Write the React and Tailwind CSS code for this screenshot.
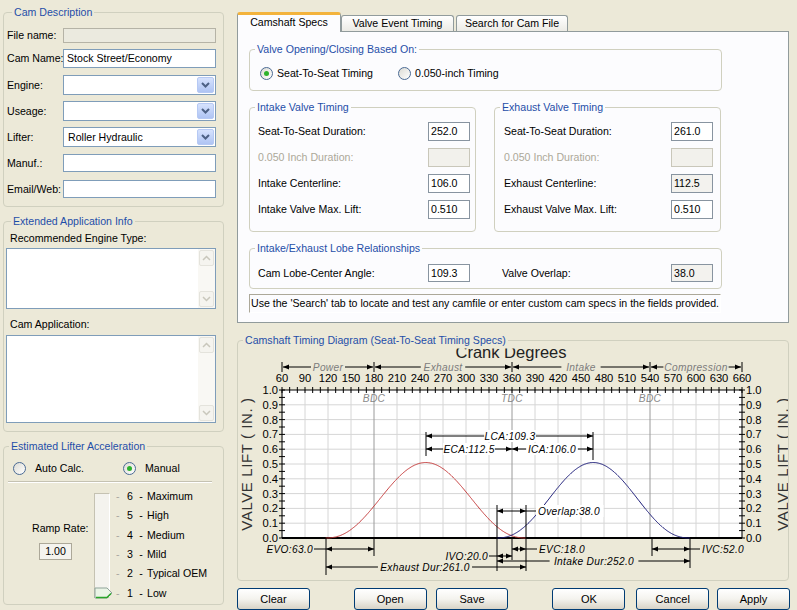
import React from 'react';

// crank degrees -> px, lift -> px (page coordinates, chart svg uses same viewBox)
const X = (d) => 282 + ((d - 60) * 460) / 600;
const Y = (v) => 538 - v * 148;

function lobe(open, close, peak) {
  const pts = [];
  for (let d = open; d <= close; d += 1) {
    const t = (d - open) / (close - open);
    const l = peak * Math.pow((1 - Math.cos(2 * Math.PI * t)) / 2, 1.15);
    pts.push(`${X(d).toFixed(1)},${Y(l).toFixed(1)}`);
  }
  return 'M' + pts.join(' L');
}

const Arrow = ({ x, y, dir }) => (
  <polygon points={`${x},${y} ${x - dir * 6},${y - 2.5} ${x - dir * 6},${y + 2.5}`} fill="#000" />
);

const ital = { fontStyle: 'italic', fontSize: 10.2, letterSpacing: 0.3 };

function Label({ x, y, text, anchor = 'middle', bg }) {
  const w = text.length * 5.3 + 4;
  const left = anchor === 'middle' ? x - w / 2 : anchor === 'end' ? x - w + 2 : x - 2;
  return (
    <g>
      {bg && <rect x={left} y={y - 6} width={w} height={12} fill={bg} />}
      <text x={x} y={y + 4} textAnchor={anchor} style={ital} fill="#000">
        {text}
      </text>
    </g>
  );
}

function Dim({ x1, x2, y, from, to }) {
  return (
    <g>
      <line x1={from ?? x1} x2={to ?? x2} y1={y} y2={y} stroke="#000" />
      <Arrow x={x1} y={y} dir={-1} />
      <Arrow x={x2} y={y} dir={1} />
    </g>
  );
}

function Chart() {
  const vgrid = [];
  for (let d = 60; d <= 660; d += 30) vgrid.push(d);
  const hgrid = [];
  for (let i = 1; i < 10; i++) hgrid.push(i / 10);
  const topTicks = [];
  for (let d = 60; d <= 660; d += 10) topTicks.push(d);
  const yTicks = [];
  for (let i = 0; i <= 20; i++) yTicks.push(i * 0.05);
  const yLabels = [];
  for (let i = 0; i <= 10; i++) yLabels.push(i / 10);
  const phases = [
    [60, 180, 'Power'],
    [180, 360, 'Exhaust'],
    [360, 540, 'Intake'],
    [540, 660, 'Compression'],
  ];

  return (
    <svg
      width="550"
      height="233"
      viewBox="238 347 550 233"
      className="block"
      fontFamily="'Liberation Sans', Arial, sans-serif"
    >
      <defs>
        <clipPath id="titleClip">
          <rect x="238" y="348.5" width="550" height="20" />
        </clipPath>
      </defs>
      <text x="511" y="358" textAnchor="middle" fontSize="16.5" fill="#222" clipPath="url(#titleClip)">
        Crank Degrees
      </text>

      {/* stroke phases */}
      {phases.map(([a, b, t]) => {
        const x1 = X(a) + 1;
        const x2 = X(b) - 1;
        const cx = (x1 + x2) / 2;
        const w = t.length * 5.2 + 8;
        return (
          <g key={t}>
            <line x1={x1} x2={x2} y1="367" y2="367" stroke="#000" />
            <Arrow x={x1} y={367} dir={-1} />
            <Arrow x={x2} y={367} dir={1} />
            <rect x={cx - w / 2} y="361" width={w} height="11" fill="#ECE9D8" />
            <text x={cx} y="370.5" textAnchor="middle" style={ital} fill="#7c7c7c">
              {t}
            </text>
          </g>
        );
      })}
      {[60, 180, 360, 540, 660].map((d) => (
        <line key={d} x1={X(d)} x2={X(d)} y1="362" y2="372" stroke="#000" />
      ))}

      {vgrid.map((d) => (
        <text key={d} x={X(d)} y="381.5" textAnchor="middle" fontSize="11.2" fill="#000">
          {d}
        </text>
      ))}

      {/* plot */}
      <rect x="282" y="390" width="460" height="148" fill="#fff" />
      {hgrid.map((v) => (
        <line key={v} x1="282" x2="742" y1={Y(v)} y2={Y(v)} stroke="#d6d6d6" />
      ))}
      {vgrid.map((d) => (
        <line
          key={d}
          x1={X(d)}
          x2={X(d)}
          y1="390"
          y2="538"
          stroke={d === 180 || d === 360 || d === 540 ? '#9a9a9a' : '#d6d6d6'}
        />
      ))}
      {[
        [180, 'BDC'],
        [360, 'TDC'],
        [540, 'BDC'],
      ].map(([d, t]) => (
        <text key={d} x={X(d)} y="402" textAnchor="middle" style={ital} fill="#8a8a8a">
          {t}
        </text>
      ))}

      <line x1="282" x2="742" y1="390" y2="390" stroke="#000" />
      {topTicks.map((d) => (
        <line key={d} x1={X(d)} x2={X(d)} y1="387" y2="393" stroke="#000" />
      ))}
      <line x1="282" x2="282" y1="390" y2="538" stroke="#000" />
      <line x1="742" x2="742" y1="390" y2="538" stroke="#000" />
      {yTicks.map((v) => (
        <g key={v}>
          <line x1="279" x2="285" y1={Y(v)} y2={Y(v)} stroke="#000" />
          <line x1="739" x2="745" y1={Y(v)} y2={Y(v)} stroke="#000" />
        </g>
      ))}
      <line x1="282" x2="742" y1="538" y2="538" stroke="#000" strokeWidth="2" />
      {yLabels.map((v) => (
        <g key={v}>
          <text x="278" y={Y(v) + 4} textAnchor="end" fontSize="11.2" fill="#000">
            {v.toFixed(1)}
          </text>
          <text x="746" y={Y(v) + 4} fontSize="11.2" fill="#000">
            {v.toFixed(1)}
          </text>
        </g>
      ))}

      <text transform="translate(252,464) rotate(-90)" textAnchor="middle" fontSize="15" letterSpacing="0.6" fill="#333">
        VALVE LIFT ( IN. )
      </text>
      <text transform="translate(788,464) rotate(-90)" textAnchor="middle" fontSize="15" letterSpacing="0.6" fill="#333">
        VALVE LIFT ( IN. )
      </text>

      {/* lobes */}
      <path d={lobe(117, 378, 0.51)} fill="none" stroke="#c43c3c" />
      <path d={lobe(340, 592, 0.51)} fill="none" stroke="#1c1c78" />

      {/* centerline dims */}
      <line x1="426" x2="426" y1="432" y2="456" stroke="#000" />
      <line x1="593" x2="593" y1="432" y2="460" stroke="#000" />
      <Dim x1={426} x2={593} y={436} />
      <Label x={510} y={436} text="LCA:109.3" bg="#fff" />
      <Dim x1={426} x2={512} y={449} />
      <Label x={469} y={449} text="ECA:112.5" bg="#fff" />
      <Dim x1={512} x2={593} y={449} />
      <Label x={552} y={449} text="ICA:106.0" bg="#fff" />

      {/* overlap */}
      <line x1="497" x2="497" y1="505" y2="571" stroke="#000" />
      <line x1="526" x2="526" y1="505" y2="571" stroke="#000" />
      <Dim x1={497} x2={526} y={511} to={537} />
      <Label x={538} y={511} text="Overlap:38.0" anchor="start" bg="#fff" />

      {/* event dims below plot */}
      <line x1="326" x2="326" y1="538" y2="575" stroke="#000" />
      <line x1="374" x2="374" y1="538" y2="556" stroke="#000" />
      <line x1="512" x2="512" y1="538" y2="560" stroke="#000" />
      <line x1="652" x2="652" y1="538" y2="556" stroke="#000" />
      <line x1="690" x2="690" y1="538" y2="568" stroke="#000" />

      <Dim x1={326} x2={374} y={549} from={314} />
      <Label x={313} y={549} text="EVO:63.0" anchor="end" />
      <Dim x1={497} x2={512} y={556} from={489} />
      <Label x={488} y={556} text="IVO:20.0" anchor="end" />
      <Dim x1={512} x2={526} y={549} to={537} />
      <Label x={539} y={549} text="EVC:18.0" anchor="start" />
      <Dim x1={652} x2={690} y={549} to={700} />
      <Label x={702} y={549} text="IVC:52.0" anchor="start" />
      <Dim x1={497} x2={690} y={561} />
      <Label x={594} y={561} text="Intake Dur:252.0" bg="#ECE9D8" />
      <Dim x1={326} x2={526} y={567} />
      <Label x={425} y={567} text="Exhaust Dur:261.0" bg="#ECE9D8" />
    </svg>
  );
}

function Group({ title, className = '', children }) {
  return (
    <fieldset className={`border border-[#D0D0BF] rounded-[4px] ${className}`}>
      <legend className="ml-[5px] px-[2px] leading-[13px] text-[#1f4ea8]">{title}</legend>
      {children}
    </fieldset>
  );
}

function Radio({ checked }) {
  return (
    <span className="w-[13px] h-[13px] shrink-0 rounded-full border border-[#4a6a94] bg-linear-to-br from-[#DCDBD4] to-white flex items-center justify-center">
      {checked && <span className="w-[5px] h-[5px] rounded-full bg-[#2DB22D]" />}
    </span>
  );
}

function Chevron({ up, color = '#4D6185', w = 2 }) {
  return (
    <svg width="9" height="6" viewBox="0 0 9 6">
      <path d={up ? 'M1 5 L4.5 1.5 L8 5' : 'M1 1 L4.5 4.5 L8 1'} fill="none" stroke={color} strokeWidth={w} />
    </svg>
  );
}

function Combo({ value }) {
  return (
    <div className="w-[153px] h-full border border-[#7F9DB9] bg-white flex items-center justify-between pl-[4px] pr-[1px]">
      <span>{value}</span>
      <div className="w-[17px] h-[16px] rounded-[2px] border border-[#B6C9F4] bg-linear-to-b from-[#D6E2FD] to-[#AFC4F3] flex items-center justify-center">
        <Chevron />
      </div>
    </div>
  );
}

function Field({ label, children, className = 'mt-[6px] h-[20px]' }) {
  return (
    <div className={`flex items-center ${className}`}>
      <span className="w-[56px] whitespace-nowrap">{label}</span>
      {children}
    </div>
  );
}

const box = 'w-[153px] h-full border border-[#7F9DB9] bg-white flex items-center pl-[3px]';

function TextArea({ className }) {
  const btn =
    'h-[16px] mx-[1px] rounded-[2px] border border-[#E4E3DC] bg-[#F5F4EF] flex items-center justify-center';
  return (
    <div className={`w-[210px] border border-[#7F9DB9] bg-white flex justify-end ${className}`}>
      <div className="w-[17px] h-full py-[1px] flex flex-col bg-[#F9F8F4]">
        <div className={btn}>
          <Chevron up color="#C9C7BC" w={1.5} />
        </div>
        <div className="flex-1" />
        <div className={btn}>
          <Chevron color="#C9C7BC" w={1.5} />
        </div>
      </div>
    </div>
  );
}

function LeftColumn() {
  const rates = [
    ['6', 'Maximum'],
    ['5', 'High'],
    ['4', 'Medium'],
    ['3', 'Mild'],
    ['2', 'Typical OEM'],
    ['1', 'Low'],
  ];
  return (
    <div className="w-[237px] shrink-0 pl-[3px] pt-[6px]">
      <Group title="Cam Description" className="w-[221px] pl-[3px] pb-[8px]">
        <Field label="File name:" className="mt-[9px] h-[15px]">
          <div className="w-[153px] h-full border border-[#B5B3A6] bg-[#EBEADF]" />
        </Field>
        <Field label="Cam Name:" className="mt-[6px] h-[19px]">
          <div className={box}>Stock Street/Economy</div>
        </Field>
        <Field label="Engine:" className="mt-[7px] h-[20px]">
          <Combo />
        </Field>
        <Field label="Useage:">
          <Combo />
        </Field>
        <Field label="Lifter:">
          <Combo value="Roller Hydraulic" />
        </Field>
        <Field label="Manuf.:" className="mt-[7px] h-[18px]">
          <div className={box} />
        </Field>
        <Field label="Email/Web:" className="mt-[8px] h-[18px]">
          <div className={box} />
        </Field>
      </Group>

      <Group title="Extended Application Info" className="mt-[8px] w-[221px] pl-[2px] pb-[8px]">
        <div className="mt-[4px] ml-[4px]">Recommended Engine Type:</div>
        <TextArea className="mt-[3px] h-[61px]" />
        <div className="mt-[9px] ml-[4px]">Cam Application:</div>
        <TextArea className="mt-[4px] h-[88px]" />
      </Group>

      <Group title="Estimated Lifter Acceleration" className="mt-[8px] w-[221px] pb-[6px]">
        <div className="mt-[7px] h-[16px] pl-[9px] flex items-center">
          <div className="w-[110px] flex items-center gap-[9px]">
            <Radio />
            <span>Auto Calc.</span>
          </div>
          <div className="flex items-center gap-[9px]">
            <Radio checked />
            <span>Manual</span>
          </div>
        </div>
        <div className="mt-[5px] ml-[4px] w-[204px] h-[2px] border-t border-[#C5C2B2] border-b border-b-white" />
        <div className="mt-[10px] h-[105px] flex">
          <div className="w-[90px]">
            <div className="pt-[29px] pl-[28px]">Ramp Rate:</div>
            <div className="mt-[8px] ml-[35px] w-[33px] h-[17px] border border-[#ACA899] bg-[#F4F3EE] flex items-center justify-center">
              1.00
            </div>
          </div>
          <div className="relative w-[16px] h-full border border-[#C5C2B2] border-r-white bg-[#F4F3EE]">
            <svg className="absolute left-[-1px] top-[93px]" width="20" height="12" viewBox="0 0 20 12">
              <path d="M1 1 H13 L18 6 L13 11 H1 Z" fill="#EAF4E6" stroke="#8FA39A" />
              <path d="M2 10.5 H13 L17 6.5" fill="none" stroke="#28A428" strokeWidth="1.5" />
            </svg>
          </div>
          <div className="ml-[6px] -mt-[6px] flex flex-col">
            {rates.map(([n, t]) => (
              <div key={n} className="shrink-0 h-[19.3px] flex items-center whitespace-nowrap">
                <span className="w-[11px] text-[#A8A6A0]">-</span>
                <span className="w-[8px]">{n}</span>
                <span className="w-[12px] text-center">-</span>
                <span>{t}</span>
              </div>
            ))}
          </div>
        </div>
      </Group>
    </div>
  );
}

function NumBox({ value, kind = 'edit' }) {
  const cls =
    kind === 'disabled'
      ? 'border-[#C9C7BA] bg-[#F2F1EC]'
      : kind === 'read'
        ? 'border-[#8894A0] bg-[#F3F2EE]'
        : 'border-[#8894A0] bg-white';
  return <div className={`w-[42px] h-full border ${cls} flex items-center pl-[2px]`}>{value}</div>;
}

function TimingGroup({ title, rows, className = '', pad }) {
  return (
    <Group title={title} className={`w-[227px] pb-[12px] ${className}`}>
      {rows.map(([label, value, kind], i) => (
        <div key={label} className={`h-[19px] flex items-center justify-between ${pad} ${i === 0 ? 'mt-[8px]' : 'mt-[7px]'}`}>
          <span className={kind === 'disabled' ? 'text-[#ACA899]' : ''}>{label}</span>
          <NumBox value={value} kind={kind} />
        </div>
      ))}
    </Group>
  );
}

function Btn({ children, className = '' }) {
  return (
    <div
      className={`w-[73px] h-[22px] rounded-[3px] border border-[#003C74] bg-linear-to-b from-white via-[#F4F3EE] to-[#D8D3C6] flex items-center justify-center text-[11px] ${className}`}
    >
      {children}
    </div>
  );
}

function RightColumn() {
  return (
    <div className="w-[553px] shrink-0 pt-[12px]">
      <div className="relative z-10 flex items-end h-[19px]">
        <div className="w-[104px] h-[20px] -mb-[1px] pb-[3px] rounded-t-[3px] border-x border-[#919B9C] border-t-[3px] border-t-[#F3B33C] bg-[#FCFCFE] flex items-center justify-center">
          Camshaft Specs
        </div>
        <div className="w-[113px] h-[16px] rounded-t-[3px] border-x border-t border-[#919B9C] bg-linear-to-b from-white to-[#ECEBE5] flex items-center justify-center">
          Valve Event Timing
        </div>
        <div className="ml-[2px] w-[112px] h-[16px] rounded-t-[3px] border-x border-t border-[#919B9C] bg-linear-to-b from-white to-[#ECEBE5] flex items-center justify-center">
          Search for Cam File
        </div>
      </div>

      <div className="w-[552px] h-[292px] border border-[#919B9C] bg-[#FCFCFE] pl-[11px] pt-[11px]">
        <Group title="Valve Opening/Closing Based On:" className="w-[473px] pb-[9px]">
          <div className="mt-[9px] h-[16px] pl-[10px] flex items-center">
            <div className="w-[138px] flex items-center gap-[4px]">
              <Radio checked />
              <span>Seat-To-Seat Timing</span>
            </div>
            <div className="flex items-center gap-[4px]">
              <Radio />
              <span>0.050-inch Timing</span>
            </div>
          </div>
        </Group>

        <div className="mt-[10px] flex gap-[18px]">
          <TimingGroup
            title="Intake Valve Timing"
            pad="pl-[8px] pr-[5px]"
            rows={[
              ['Seat-To-Seat Duration:', '252.0'],
              ['0.050 Inch Duration:', '', 'disabled'],
              ['Intake Centerline:', '106.0'],
              ['Intake Valve Max. Lift:', '0.510'],
            ]}
          />
          <TimingGroup
            title="Exhaust Valve Timing"
            pad="pl-[9px] pr-[7px]"
            rows={[
              ['Seat-To-Seat Duration:', '261.0'],
              ['0.050 Inch Duration:', '', 'disabled'],
              ['Exhaust Centerline:', '112.5', 'read'],
              ['Exhaust Valve Max. Lift:', '0.510'],
            ]}
          />
        </div>

        <Group title="Intake/Exhaust Lobe Relationships" className="mt-[10px] w-[473px] pb-[6px]">
          <div className="mt-[9px] h-[18px] pl-[8px] flex items-center">
            <span className="w-[170px]">Cam Lobe-Center Angle:</span>
            <NumBox value="109.3" />
            <span className="ml-[32px] w-[169px]">Valve Overlap:</span>
            <NumBox value="38.0" kind="read" />
          </div>
        </Group>

        <div className="mt-[5px] w-[472px] h-[19px] border-t border-l border-[#ACA899] border-b border-r border-b-white border-r-white flex items-center pl-[1px] whitespace-nowrap">
          Use the 'Search' tab to locate and test any camfile or enter custom cam specs in the fields provided.
        </div>
      </div>

      <Group title="Camshaft Timing Diagram (Seat-To-Seat Timing Specs)" className="mt-[11px] w-[552px] h-[247px] overflow-hidden">
        <Chart />
      </Group>

      <div className="mt-[7px] flex">
        <Btn>Clear</Btn>
        <Btn className="ml-[44px]">Open</Btn>
        <Btn className="ml-[9px]">Save</Btn>
        <Btn className="ml-[44px]">OK</Btn>
        <Btn className="ml-[11px]">Cancel</Btn>
        <Btn className="ml-[8px]">Apply</Btn>
      </div>
    </div>
  );
}

export default function App() {
  return (
    <div className="w-[797px] h-[610px] overflow-hidden bg-[#ECE9D8] flex font-['Liberation_Sans',Arial,sans-serif] text-[10.6px] leading-[13px] text-black">
      <LeftColumn />
      <RightColumn />
    </div>
  );
}
